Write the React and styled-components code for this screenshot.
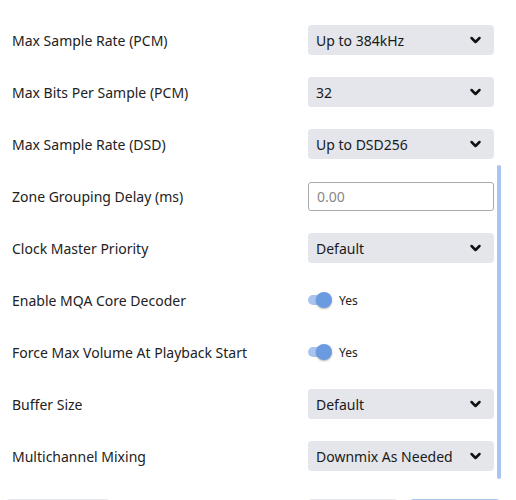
import React from 'react';
import styled, { createGlobalStyle } from 'styled-components';

const Global = createGlobalStyle`
  html, body { margin: 0; padding: 0; background: #fff; }
  body { font-family: "Noto Sans", "Open Sans", sans-serif; color: #222; overflow: hidden; }
`;

const Page = styled.div`
  position: relative;
  width: 516px;
  height: 500px;
  overflow: hidden;
`;

const List = styled.div`
  display: flex;
  flex-direction: column;
  padding: 14px 22px 0 12px;
`;

const Row = styled.div`
  display: flex;
  align-items: center;
  justify-content: space-between;
  height: 52px;
`;

const Label = styled.span`
  font-size: 14px;
  color: #222;
`;

const Select = styled.div`
  box-sizing: border-box;
  width: 186px;
  height: 30px;
  display: flex;
  align-items: center;
  justify-content: space-between;
  padding: 0 12px 0 8px;
  background: #e4e6eb;
  border-radius: 4px;
  font-size: 14px;
  color: #1a1a1a;
`;

const Input = styled.div`
  box-sizing: border-box;
  width: 186px;
  height: 29px;
  display: flex;
  align-items: center;
  padding: 0 8px;
  border: 1px solid #aaa;
  border-radius: 3px;
  font-size: 14px;
  color: #888;
`;

const ToggleWrap = styled.div`
  width: 186px;
  display: flex;
  align-items: center;
  gap: 11px;
`;

const Track = styled.div`
  position: relative;
  width: 20px;
  height: 10px;
  border-radius: 5px;
  background: #a9c4ee;
`;

const Thumb = styled.div`
  position: absolute;
  top: -3px;
  right: -4px;
  width: 16px;
  height: 16px;
  border-radius: 50%;
  background: #6a9be0;
  box-shadow: 0 1px 2px rgba(0, 0, 0, 0.3);
`;

const ToggleText = styled.span`
  font-size: 12px;
  color: #222;
`;

const Scrollbar = styled.div`
  position: absolute;
  left: 497px;
  top: 165px;
  width: 4px;
  height: 314px;
  border-radius: 2px;
  background: #a9c4ee;
`;

const Footer = styled.div`
  display: flex;
  padding: 17px 16px 0 6px;
  gap: 12px;
`;

const Btn = styled.div`
  width: ${p => p.w}px;
  height: 30px;
  border-radius: 4px;
  background: ${p => (p.primary ? '#a9c4ee' : '#e4e6eb')};
  margin-left: ${p => p.push || 0}px;
`;

const Chevron = () => (
  <svg width="13" height="10" viewBox="0 0 13 10">
    <path d="M2.5 3 L6.5 7 L10.5 3" fill="none" stroke="#111" strokeWidth="2.5" strokeLinecap="round" strokeLinejoin="round" />
  </svg>
);

const rows = [
  { label: 'Max Sample Rate (PCM)', type: 'select', value: 'Up to 384kHz' },
  { label: 'Max Bits Per Sample (PCM)', type: 'select', value: '32' },
  { label: 'Max Sample Rate (DSD)', type: 'select', value: 'Up to DSD256' },
  { label: 'Zone Grouping Delay (ms)', type: 'input', value: '0.00' },
  { label: 'Clock Master Priority', type: 'select', value: 'Default' },
  { label: 'Enable MQA Core Decoder', type: 'toggle', value: 'Yes' },
  { label: 'Force Max Volume At Playback Start', type: 'toggle', value: 'Yes' },
  { label: 'Buffer Size', type: 'select', value: 'Default' },
  { label: 'Multichannel Mixing', type: 'select', value: 'Downmix As Needed' },
];

const Control = ({ type, value }) => {
  if (type === 'input') return <Input>{value}</Input>;
  if (type === 'toggle')
    return (
      <ToggleWrap>
        <Track><Thumb /></Track>
        <ToggleText>{value}</ToggleText>
      </ToggleWrap>
    );
  return (
    <Select>
      <span>{value}</span>
      <Chevron />
    </Select>
  );
};

export default function App() {
  return (
    <Page>
      <Global />
      <List>
        {rows.map(r => (
          <Row key={r.label}>
            <Label>{r.label}</Label>
            <Control type={r.type} value={r.value} />
          </Row>
        ))}
      </List>
      <Footer>
        <Btn w={104} />
        <Btn w={90} push={186} />
        <Btn w={90} primary />
      </Footer>
      <Scrollbar />
    </Page>
  );
}
